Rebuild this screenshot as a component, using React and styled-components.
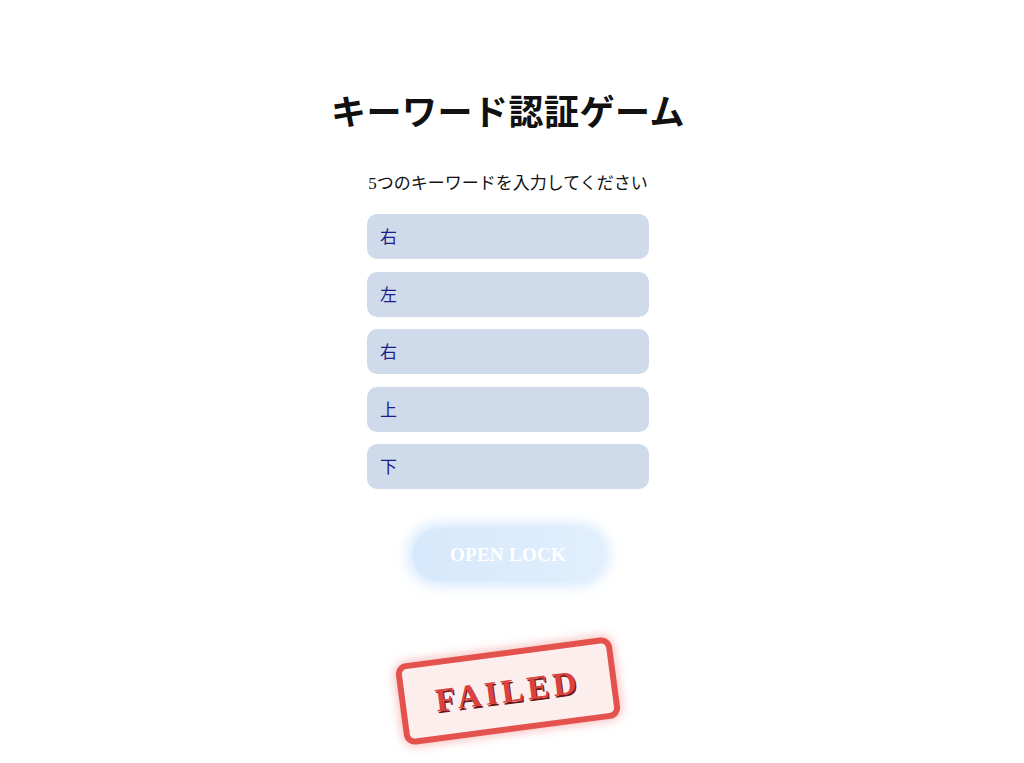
import React from "react";
import styled, { createGlobalStyle } from "styled-components";

const Global = createGlobalStyle`
  html, body { margin: 0; padding: 0; background: #ffffff; }
  body { font-family: "Liberation Serif", "Noto Sans CJK JP", serif; color: #111; }
`;

const Page = styled.div`
  display: flex;
  flex-direction: column;
  align-items: center;
  padding: 92px 8px 0 0;
  height: 763px;
  overflow: hidden;
  box-sizing: border-box;
`;

const Title = styled.h1`
  margin: 0;
  font-size: 35px;
  font-weight: 700;
  line-height: 44px;
  letter-spacing: 0.5px;
`;

const Subtitle = styled.p`
  margin: 37px 0 0;
  font-size: 17px;
  line-height: 22px;
`;

const Form = styled.div`
  margin-top: 19px;
  display: flex;
  flex-direction: column;
  gap: 12.5px;
`;

const Field = styled.input`
  width: 282px;
  height: 45px;
  box-sizing: border-box;
  border: none;
  border-radius: 10px;
  background: #cfdbea;
  padding: 0 13px 2px;
  font-family: "Liberation Serif", "Noto Sans CJK JP", serif;
  font-size: 17px;
  color: #1c1f8a;
  outline: none;
`;

const Button = styled.button`
  margin-top: 39px;
  width: 192px;
  height: 53px;
  border: none;
  border-radius: 27px;
  background: linear-gradient(90deg, #d6e8fb, #e1effd);
  box-shadow: 0 0 14px 4px rgba(190, 220, 252, 0.7);
  color: #ffffff;
  font-family: "Liberation Serif", serif;
  font-weight: 700;
  font-size: 19px;
  letter-spacing: 0.3px;
`;

const Stamp = styled.div`
  margin-top: 69px;
  width: 218px;
  height: 82px;
  box-sizing: border-box;
  border: 6px solid #e4524e;
  border-radius: 11px;
  background: #fdeeee;
  box-shadow: 0 0 10px 2px rgba(228, 82, 78, 0.35);
  transform: rotate(-7.5deg);
  display: flex;
  align-items: center;
  justify-content: center;
  color: #d9423f;
  font-family: "Liberation Serif", serif;
  font-weight: 700;
  font-size: 33px;
  letter-spacing: 4px;
  text-shadow: 1px 2px 0 #6e1512;
`;

const values = ["右", "左", "右", "上", "下"];

export default function App() {
  return (
    <>
      <Global />
      <Page>
        <Title>キーワード認証ゲーム</Title>
        <Subtitle>5つのキーワードを入力してください</Subtitle>
        <Form>
          {values.map((v, i) => (
            <Field key={i} defaultValue={v} />
          ))}
        </Form>
        <Button>OPEN LOCK</Button>
        <Stamp>FAILED</Stamp>
      </Page>
    </>
  );
}
